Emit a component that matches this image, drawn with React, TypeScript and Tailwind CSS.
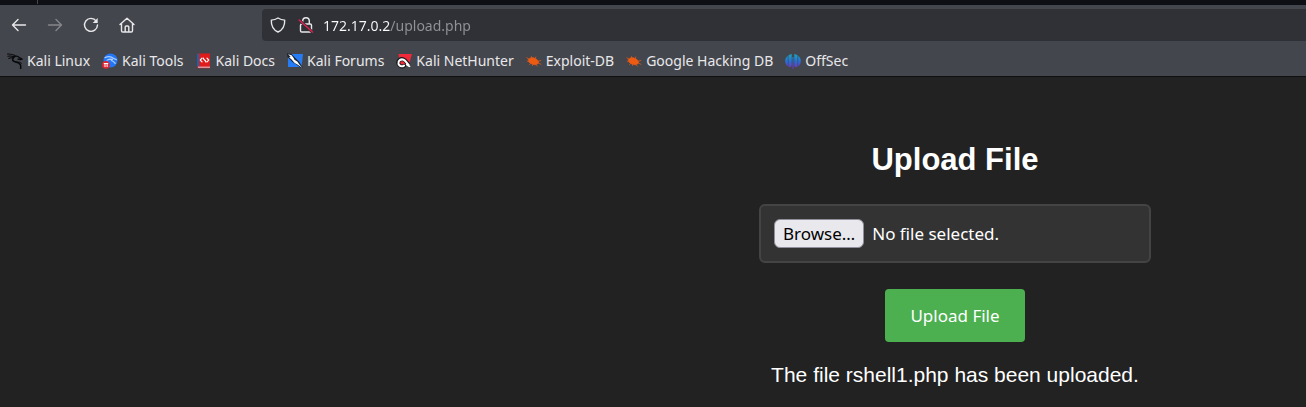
import { useState } from "react";
import type { ReactNode } from "react";

const stroke = {
  fill: "none",
  stroke: "currentColor",
  strokeWidth: 1.4,
  strokeLinecap: "round" as const,
  strokeLinejoin: "round" as const,
};

function Icon({ children }: { children: ReactNode }) {
  return (
    <svg viewBox="0 0 16 16" className="size-4 shrink-0" aria-hidden="true" {...stroke}>
      {children}
    </svg>
  );
}

function DragonIcon() {
  return (
    <Icon>
      <g stroke="#08090b">
        <path d="M.5 1c2.500-.2 5 .2 7.500 1.500M.8 3.200c2.400-.4 4.400-.2 6.200.6M1.800 5.400c1.400-.8 3-.8 4.600-.2" strokeWidth="1.100" />
        <path d="M7.500 3.800C5 5 4.900 7.600 7.300 8.500c2.400.9 5.100 1.300 6 3.100.6 1.200.5 2.600.3 4" strokeWidth="1.500" />
        <path d="M8 3.300c2-.3 3.500.1 4.300 1.300l2.900 1.500-1.700.6-2.600-.5" strokeWidth="1.200" />
        <path d="M9 9.200c2.300-.6 4-.2 5.500 1.100" strokeWidth="0.900" />
      </g>
    </Icon>
  );
}

function ToolsIcon() {
  return (
    <Icon>
      <g stroke="none">
        <circle cx="8.500" cy="7.500" r="7" fill="#2476f5" />
      </g>
      <path d="M3 4.600c3.500-1.500 6.500-1 8.500.8l3 1.300M5 7.200C7.300 5.800 9 5.800 10.500 6.400M9 6.500c.5 2 3.500 1.500 4.200 4" stroke="#a9ccff" strokeWidth="1.200" />
      <g stroke="none">
        <circle cx="3.900" cy="11.900" r="3.800" fill="#e5242e" />
        <path d="M1.800 10h4.400v1h-.6v3h-1v-3H3.500v3h-1v-3h-.7z" fill="#fff" />
      </g>
    </Icon>
  );
}

function DocsIcon() {
  return (
    <Icon>
      <g stroke="none">
        <path d="M2.500.5H14v14.700H2.500a1.500 1.500 0 0 1-1.500-1.500V2A1.500 1.500 0 0 1 2.500.5z" fill="#e01b1b" />
        <path d="M1 2a1.500 1.500 0 0 1 1.500-1.500H3v13H1z" fill="#1764b5" />
        <path d="M2 13.700H14v.9H2z" fill="#d7e6f5" />
      </g>
      <path d="M6 5.200 4.300 7 6 8.800M11 5.200 12.700 7 11 8.800M7.300 5.200c.3 1.900 2.200 1.800 2.500 3.600" stroke="#fff" strokeWidth="1.200" />
    </Icon>
  );
}

function ForumsIcon() {
  return (
    <Icon>
      <g stroke="none">
        <path d="M1 1h15l-1.500 13H1z" fill="#267cf5" />
        <path d="M0 .3 4.500 1 8.500 5.300l3.500 3.200 3.900 6.300-2 .2-4.200-3.200L5.500 9 .5 4z" fill="#182230" />
        <path d="m1 1.300 3.600.9 1.700 2.200 1.200 2.300 3 2 1.500 2.200 3.300 4.200-4.400-3.300-3.200-1.700L4.600 6.600 2 4.200 3.700 4z" fill="#fff" />
      </g>
    </Icon>
  );
}

function NetHunterIcon() {
  return (
    <Icon>
      <path d="M2.500 1H15.900l-3 11H4z" fill="#f0293b" stroke="none" />
      <path d="M2.500 11C1.400 7.500 4.600 5.300 7.700 6.500c2.100.8 2.700 2.900 4.400 4.700M3 11.500c1 2.200 3.500 2.600 5 1.300" stroke="#15151b" strokeWidth="4" />
      <path d="M2.500 10.700C1.800 7.600 4.900 5.600 7.600 6.700c2.100.9 2.600 3 5 5M2.800 11.500c1 2 3.400 2.300 5.200 1.100" stroke="#fff" strokeWidth="2.100" />
      <path d="m10.700 9.500 4 4.100-1.500.7-3.400-2.400" fill="#fff" stroke="none" />
    </Icon>
  );
}

function BugIcon() {
  return (
    <Icon>
      <g stroke="#ed5b12" strokeWidth="0.700">
        <path d="M2.500 6.200 5 4.700l3 .2 3 1.700 1.700 2.300-.9 1.900-2.600 1-3.300-.8-2.600-1.600z" fill="#ed5b12" />
        <path d="M3.500 6.500.8 4.700M3.500 8.500l-2.200-.3M4.800 10.200l-1.300 1.300M6 5 5.500 3.500M9 5.500 9.800 4M12 8.300l2.800-.8M12 9.800l2.900 1.500M10 11.500l1.200 1.600M7 11.200l-.5 1.300" />
      </g>
    </Icon>
  );
}

function OffSecIcon() {
  return (
    <Icon>
      <defs>
        <linearGradient id="offsec" gradientUnits="userSpaceOnUse" x1="0" y1="1" x2="0" y2="15">
          <stop offset="0" stopColor="#16a8bd" />
          <stop offset="0.500" stopColor="#2472d8" />
          <stop offset="1" stopColor="#6f35c5" />
        </linearGradient>
      </defs>
      <g stroke="none" fill="url(#offsec)">
        <path d="M2.800 2.700v10.600C-.7 10.500-.7 5.500 2.800 2.700z" />
        <path d="M3.500 2.200C4.500 1.400 5.600 1 6.700.9V12c0 1.200-.7 2-1.500 2.200l-1.700-.6z" />
        <path d="M7.500 4h1v12h-1z" />
        <path d="M9.300.9c1.100.1 2.200.5 3.200 1.300v11.400l-1.700.6C10 14 9.300 13.200 9.300 12z" />
        <path d="M13.200 2.700c3.500 2.800 3.500 7.800 0 10.600z" />
      </g>
    </Icon>
  );
}

const navigation = [
  { label: "Back", disabled: false, art: <path d="M14.500 8h-13M7 2.500 1.500 8 7 13.500" /> },
  { label: "Forward", disabled: true, art: <path d="M1.500 8h13M9 2.500 14.500 8 9 13.500" /> },
  {
    label: "Reload",
    disabled: false,
    art: (
      <>
        <path d="M13.300 4.100A6.500 6.500 0 1 0 14.500 8" />
        <path d="M14.700 1v5h-5z" fill="currentColor" stroke="none" />
      </>
    ),
  },
  {
    label: "Home",
    disabled: false,
    art: <path d="m1 7.500 7-6.300 7 6.300M2.500 6.500v7.200c0 .8.500 1.300 1.300 1.300h8.400c.8 0 1.300-.5 1.300-1.300V6.500M6.200 14.500V10c0-.6.400-1 1-1h1.600c.6 0 1 .4 1 1v4.500" />,
  },
];

const bookmarks = [
  { label: "Kali Linux", icon: <DragonIcon /> },
  { label: "Kali Tools", icon: <ToolsIcon /> },
  { label: "Kali Docs", icon: <DocsIcon /> },
  { label: "Kali Forums", icon: <ForumsIcon /> },
  { label: "Kali NetHunter", icon: <NetHunterIcon /> },
  { label: "Exploit-DB", icon: <BugIcon /> },
  { label: "Google Hacking DB", icon: <BugIcon /> },
  { label: "OffSec", icon: <OffSecIcon /> },
];

function BrowserChrome() {
  return (
    <header className="border-b border-[#101013] bg-[#44464d] text-[#e8e8ea]">
      <div className="flex h-[5px] bg-[#0e0f14] pl-[37px]">
        <span className="h-1 w-px bg-[#44464d]" />
      </div>
      <div className="flex h-10 items-center">
        <nav aria-label="Navigation" className="flex w-[262px] shrink-0 gap-1 pl-[3px]">
          {navigation.map((item) => (
            <button
              key={item.label}
              type="button"
              aria-label={item.label}
              disabled={item.disabled}
              className="grid size-8 place-items-center rounded disabled:text-[#85868c]"
            >
              <Icon>{item.art}</Icon>
            </button>
          ))}
        </nav>
        <div className="flex h-8 min-w-0 flex-1 items-center gap-3 rounded-l bg-[#303136] pl-2">
          <Icon>
            <path d="M8 1c2 1.300 4.300 2 6.700 2.100C14.900 8.500 12.500 13 8 15 3.500 13 1.100 8.500 1.300 3.100 3.700 3 6 2.300 8 1z" />
          </Icon>
          <Icon>
            <path d="M4.700 7V4a3.300 3.300 0 0 1 6.600 0v3M3.800 7h8.400c.7 0 1.300.6 1.300 1.300v5.400c0 .7-.6 1.300-1.300 1.300H3.800c-.7 0-1.300-.6-1.300-1.300V8.300C2.500 7.600 3.100 7 3.800 7z" />
            <path d="m1.200 3 13.300 12" stroke="#303136" strokeWidth="3" />
            <path d="m1.200 3 13.300 12" stroke="#e2204f" strokeWidth="1.500" />
          </Icon>
          <input
            aria-label="Address"
            defaultValue="172.17.0.2/upload.php"
            className="-ml-[3px] h-8 min-w-0 flex-1 bg-[linear-gradient(90deg,#fbfbfe_67px,#929398_67px)] bg-clip-text text-sm text-transparent caret-white outline-none"
          />
        </div>
      </div>
      <nav aria-label="Bookmarks" className="flex h-[31px] items-center gap-3 pl-[7px] text-sm">
        {bookmarks.map((item) => (
          <a key={item.label} href="#" className="flex items-center gap-1 whitespace-nowrap">
            {item.icon}
            {item.label}
          </a>
        ))}
      </nav>
    </header>
  );
}

export default function App() {
  const [fileName, setFileName] = useState("No file selected.");

  return (
    <div className="flex min-h-screen flex-col bg-[#222222] font-['Noto_Sans','Open_Sans',sans-serif] text-white">
      <BrowserChrome />
      <main className="flex flex-1 flex-col items-center pt-[65px] pl-[604px]">
        <h1 className="font-['Liberation_Sans',Arial,sans-serif] text-[31px] leading-9 font-bold">Upload File</h1>
        <form className="mt-[26px] flex w-[392px] max-w-full flex-col items-center" onSubmit={(event) => event.preventDefault()}>
          <input
            id="file"
            type="file"
            className="peer sr-only"
            onChange={(event) => setFileName(event.target.files?.[0]?.name ?? "No file selected.")}
          />
          <label
            htmlFor="file"
            className="flex h-[59px] w-full items-center gap-2 rounded-md border-2 border-[#444444] bg-[#333333] px-[13px] text-[17px] peer-focus-visible:border-[#4caf50]"
          >
            <span className="flex h-[29px] items-center rounded-md border border-[#8f8f9d] bg-[#e9e9ed] px-2 text-black">
              Browse…
            </span>
            <span>{fileName}</span>
          </label>
          <button type="submit" className="mt-[26px] h-[53px] w-[140px] rounded bg-[#4caf50] text-[17px]">
            Upload File
          </button>
        </form>
        <p className="mt-5 font-['Liberation_Sans',Arial,sans-serif] text-[21px] leading-[26px]">
          The file rshell1.php has been uploaded.
        </p>
      </main>
    </div>
  );
}
